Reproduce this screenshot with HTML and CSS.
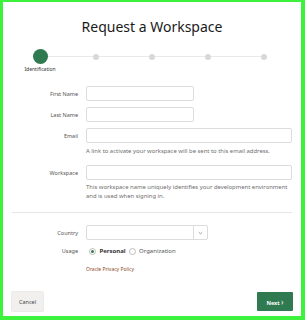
FILE: index.html
```html
<!DOCTYPE html>
<html lang="en">
<head>
    <meta charset="UTF-8">
    <meta name="viewport" content="width=device-width, initial-scale=1.0">
    <title>Request a Workspace</title>
    <link rel="stylesheet" href="styles.css">
</head>
<body>
    <div class="page">
        <h1 class="title">Request a Workspace</h1>

        <div class="stepper">
            <div class="step active">
                <span class="dot"></span>
                <span class="step-label">Identification</span>
            </div>
            <div class="step"><span class="dot"></span></div>
            <div class="step"><span class="dot"></span></div>
            <div class="step"><span class="dot"></span></div>
            <div class="step last"><span class="dot"></span></div>
        </div>

        <form class="form">
            <div class="field">
                <label>First Name</label>
                <input class="input short" type="text">
            </div>
            <div class="field">
                <label>Last Name</label>
                <input class="input short" type="text">
            </div>
            <div class="field">
                <label>Email</label>
                <input class="input" type="text">
            </div>
            <p class="help">A link to activate your workspace will be sent to this email address.</p>

            <div class="field field-ws">
                <label>Workspace</label>
                <input class="input" type="text">
            </div>
            <p class="help help-ws">This workspace name uniquely identifies your development environment and is used when signing in.</p>

            <hr class="sep">

            <div class="field">
                <label>Country</label>
                <div class="select">
                    <span class="select-value"></span>
                    <span class="select-btn">
                        <svg width="5" height="4" viewBox="0 0 5 4"><path d="M0.8 1.2 L2.5 2.8 L4.2 1.2" fill="none" stroke="#8a8a8a" stroke-width="0.8"/></svg>
                    </span>
                </div>
            </div>

            <div class="field field-usage">
                <label>Usage</label>
                <div class="radios">
                    <span class="radio checked"></span>
                    <span class="radio-text bold">Personal</span>
                    <span class="radio"></span>
                    <span class="radio-text">Organization</span>
                </div>
            </div>

            <a class="privacy" href="#">Oracle Privacy Policy</a>
        </form>

        <div class="footer">
            <button class="btn btn-cancel" type="button">Cancel</button>
            <button class="btn btn-next" type="button">Next <span class="chev">&#x203A;</span></button>
        </div>
    </div>
</body>
</html>
```

FILE: styles.css
```css
* {
    margin: 0;
    padding: 0;
    box-sizing: border-box;
    font-family: 'Noto Sans', 'Open Sans', sans-serif;
}

html, body {
    height: 100%;
}

body {
    border-style: solid;
    border-color: #3cf23c;
    border-width: 2px 4px 4px 3px;
    background: #fff;
    color: #2b2b2b;
}

.page {
    padding: 15px 9px 0;
}

.title {
    font-size: 14px;
    font-weight: 400;
    line-height: 20px;
    text-align: center;
    color: #1b1b1b;
}

/* stepper */
.stepper {
    display: flex;
    margin-top: 12px;
}

.step {
    width: 56px;
    height: 24px;
    position: relative;
    display: flex;
    flex-direction: column;
    align-items: center;
}

.step::before {
    content: '';
    position: absolute;
    top: 7px;
    left: 50%;
    width: 100%;
    height: 1px;
    background: #e9e9e9;
}

.step.last::before {
    display: none;
}

.dot {
    position: relative;
    width: 6px;
    height: 6px;
    margin-top: 4.5px;
    border-radius: 50%;
    background: #d8d8d8;
}

.step.active .dot {
    width: 15px;
    height: 15px;
    margin-top: 0;
    background: #2f7a50;
}

.step-label {
    font-size: 5px;
    line-height: 8px;
    margin-top: 1px;
    color: #333;
    white-space: nowrap;
}

/* form */
.form {
    display: flex;
    flex-direction: column;
}

.field {
    display: grid;
    grid-template-columns: 66px 1fr;
    column-gap: 8px;
    align-items: center;
    margin-top: 6px;
}

.form .field:first-child {
    margin-top: 13px;
}

.field label {
    font-size: 5.5px;
    text-align: right;
    color: #555;
}

.input {
    height: 15px;
    border: 1px solid #dcdcdc;
    border-radius: 2px;
    background: #fff;
    width: 100%;
}

.input.short {
    width: 108px;
}

.help {
    margin: 4px 0 0 74px;
    font-size: 5.9px;
    line-height: 8px;
    color: #6e6e6e;
}

.field-ws {
    margin-top: 10px;
}

.help-ws {
    margin-top: 3px;
    line-height: 9px;
}

.sep {
    border: none;
    border-top: 1px solid #e6e6e6;
    margin-top: 11px;
}

.sep + .field {
    margin-top: 12px;
}

.select {
    width: 122px;
    height: 15px;
    border: 1px solid #dcdcdc;
    border-radius: 2px;
    display: flex;
}

.select-value {
    flex: 1;
}

.select-btn {
    width: 14px;
    border-left: 1px solid #dcdcdc;
    display: flex;
    align-items: center;
    justify-content: center;
}

.field-usage {
    margin-top: 6px;
    height: 10px;
}

.radios {
    display: flex;
    align-items: center;
    padding-left: 3px;
}

.radio {
    width: 7px;
    height: 7px;
    border-radius: 50%;
    border: 1px solid #bdbdbd;
    display: flex;
    align-items: center;
    justify-content: center;
}

.radio.checked::after {
    content: '';
    width: 3px;
    height: 3px;
    border-radius: 50%;
    background: #2f7a50;
}

.radio-text {
    font-size: 6px;
    color: #555;
    margin: 0 3px 0 3.5px;
}

.radio-text.bold {
    font-weight: 700;
    color: #333;
}

.privacy {
    margin: 9px 0 0 74px;
    font-size: 5px;
    line-height: 8px;
    color: #8f4a2a;
    text-decoration: none;
}

/* footer */
.footer {
    display: flex;
    justify-content: space-between;
    margin-top: 19px;
}

.btn {
    height: 19px;
    border: none;
    border-radius: 1px;
    font-size: 5.5px;
    cursor: pointer;
}

.btn-cancel {
    width: 31px;
    background: #f1f0ee;
    color: #444;
    box-shadow: 0 0 0 1px #ebeae8;
}

.btn-next {
    width: 36px;
    background: #2f7a50;
    color: #fff;
    font-weight: 700;
    margin-right: -1px;
}

.chev {
    font-size: 8px;
    font-weight: 400;
}
```
